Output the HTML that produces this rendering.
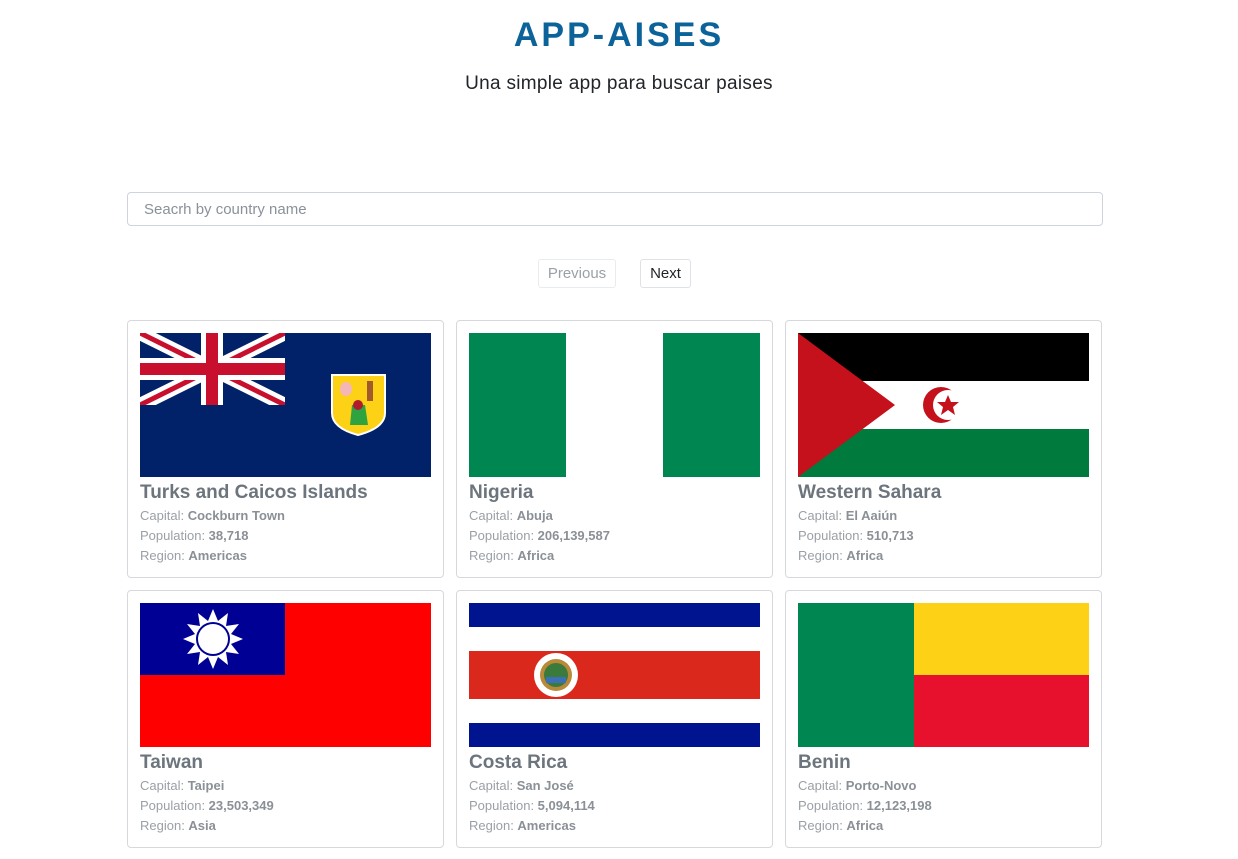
<!DOCTYPE html>
<html><head><meta charset="utf-8"><style>
*{margin:0;padding:0;box-sizing:border-box}
body{width:1238px;height:859px;background:#fff;font-family:"Segoe UI","Liberation Sans",sans-serif;position:relative;overflow:hidden}
h1{position:absolute;top:11px;left:0;width:1238px;text-align:center;color:#0b6399;font-size:34px;font-weight:bold;letter-spacing:3px;line-height:48px}
.sub{position:absolute;top:71px;left:0;width:1238px;text-align:center;font-size:19px;color:#212529;line-height:26px;letter-spacing:0.3px}
.search{position:absolute;left:127px;top:192px;width:976px;height:34px;border:1px solid #ced4da;border-radius:4px;padding-left:16px;line-height:33px;font-size:15px;color:#8a9199}
.btn{position:absolute;top:259px;height:29px;border:1px solid #dee2e6;border-radius:3px;font-size:15px;line-height:28px;text-align:center}
.card{position:absolute;width:317px;height:258px;border:1px solid #d6d8db;border-radius:4px}
.card svg{position:absolute;left:12px;top:12px}
.name{position:absolute;left:12px;top:160px;font-size:19px;font-weight:bold;color:#6c757d;line-height:24px}
.info{position:absolute;left:12px;top:185px;font-size:13px;color:#9aa0a6;line-height:20px}
.info b{color:#8a9096}
</style></head><body>
<h1>APP-AISES</h1>
<div class="sub">Una simple app para buscar paises</div>
<div class="search">Seacrh by country name</div>
<div class="btn" style="left:538px;width:78px;color:#9aa0a6;border-color:#e9ecef">Previous</div>
<div class="btn" style="left:640px;width:51px;color:#212529">Next</div>

<div class="card" style="left:127px;top:320px">
<svg width="291" height="144"><defs><clipPath id="c"><rect width="145" height="72"/></clipPath></defs><rect width="291" height="144" fill="#012169"/>
<g clip-path="url(#c)">
<path d="M0 0L145 72M145 0L0 72" stroke="#fff" stroke-width="14"/>
<path d="M0 0L145 72M145 0L0 72" stroke="#c8102e" stroke-width="5"/>
<path d="M72 0V72M0 36H145" stroke="#fff" stroke-width="22"/>
<path d="M72 0V72M0 36H145" stroke="#c8102e" stroke-width="12"/></g>
<path d="M192 42H245V80Q245 95 218 102Q192 95 192 80Z" fill="#fcd116" stroke="#fff" stroke-width="2"/>
<ellipse cx="206" cy="56" rx="6" ry="7" fill="#f4b6b6"/><rect x="227" y="48" width="6" height="20" fill="#a05a2c"/>
<path d="M210 92L212 72H225L228 92Z" fill="#2fa33f"/><circle cx="218" cy="72" r="5" fill="#b01c2e"/>
</svg>
<div class="name">Turks and Caicos Islands</div>
<div class="info">Capital: <b>Cockburn Town</b><br>Population: <b>38,718</b><br>Region: <b>Americas</b></div></div>

<div class="card" style="left:456px;top:320px">
<svg width="291" height="144"><rect width="291" height="144" fill="#fff"/><rect width="97" height="144" fill="#008751"/><rect x="194" width="97" height="144" fill="#008751"/></svg>
<div class="name">Nigeria</div>
<div class="info">Capital: <b>Abuja</b><br>Population: <b>206,139,587</b><br>Region: <b>Africa</b></div></div>

<div class="card" style="left:785px;top:320px">
<svg width="291" height="144"><rect width="291" height="48" fill="#000"/><rect y="48" width="291" height="48" fill="#fff"/><rect y="96" width="291" height="48" fill="#007a3d"/>
<path d="M0 0L97 72L0 144Z" fill="#c4111b"/>
<circle cx="143" cy="72" r="18" fill="#c4111b"/><circle cx="150" cy="72" r="15" fill="#fff"/>
<path d="M150 62L153 69L161 69L155 74L157 82L150 77L143 82L145 74L139 69L147 69Z" fill="#c4111b"/></svg>
<div class="name">Western Sahara</div>
<div class="info">Capital: <b>El Aaiún</b><br>Population: <b>510,713</b><br>Region: <b>Africa</b></div></div>

<div class="card" style="left:127px;top:590px">
<svg width="291" height="144"><rect width="291" height="144" fill="#fe0000"/><rect width="145" height="72" fill="#000095"/>
<g transform="translate(73,36)" fill="#fff">
<path d="M0-30L5-18L15-26L13-13L26-15L18-5L30 0L18 5L26 15L13 13L15 26L5 18L0 30L-5 18L-15 26L-13 13L-26 15L-18 5L-30 0L-18-5L-26-15L-13-13L-15-26L-5-18Z"/>
<circle r="17" fill="#000095"/><circle r="15"/></g></svg>
<div class="name">Taiwan</div>
<div class="info">Capital: <b>Taipei</b><br>Population: <b>23,503,349</b><br>Region: <b>Asia</b></div></div>

<div class="card" style="left:456px;top:590px">
<svg width="291" height="144"><rect width="291" height="144" fill="#fff"/><rect width="291" height="24" fill="#00148f"/><rect y="120" width="291" height="24" fill="#00148f"/><rect y="48" width="291" height="48" fill="#da291c"/>
<circle cx="87" cy="72" r="22" fill="#fff"/><circle cx="87" cy="72" r="16" fill="#b88a3a"/><circle cx="87" cy="72" r="12" fill="#3a7a3a"/><rect x="77" y="74" width="20" height="6" fill="#3b6fb6"/></svg>
<div class="name">Costa Rica</div>
<div class="info">Capital: <b>San José</b><br>Population: <b>5,094,114</b><br>Region: <b>Americas</b></div></div>

<div class="card" style="left:785px;top:590px">
<svg width="291" height="144"><rect width="291" height="72" fill="#fcd116"/><rect y="72" width="291" height="72" fill="#e8112d"/><rect width="116" height="144" fill="#008751"/></svg>
<div class="name">Benin</div>
<div class="info">Capital: <b>Porto-Novo</b><br>Population: <b>12,123,198</b><br>Region: <b>Africa</b></div></div>
</body></html>
